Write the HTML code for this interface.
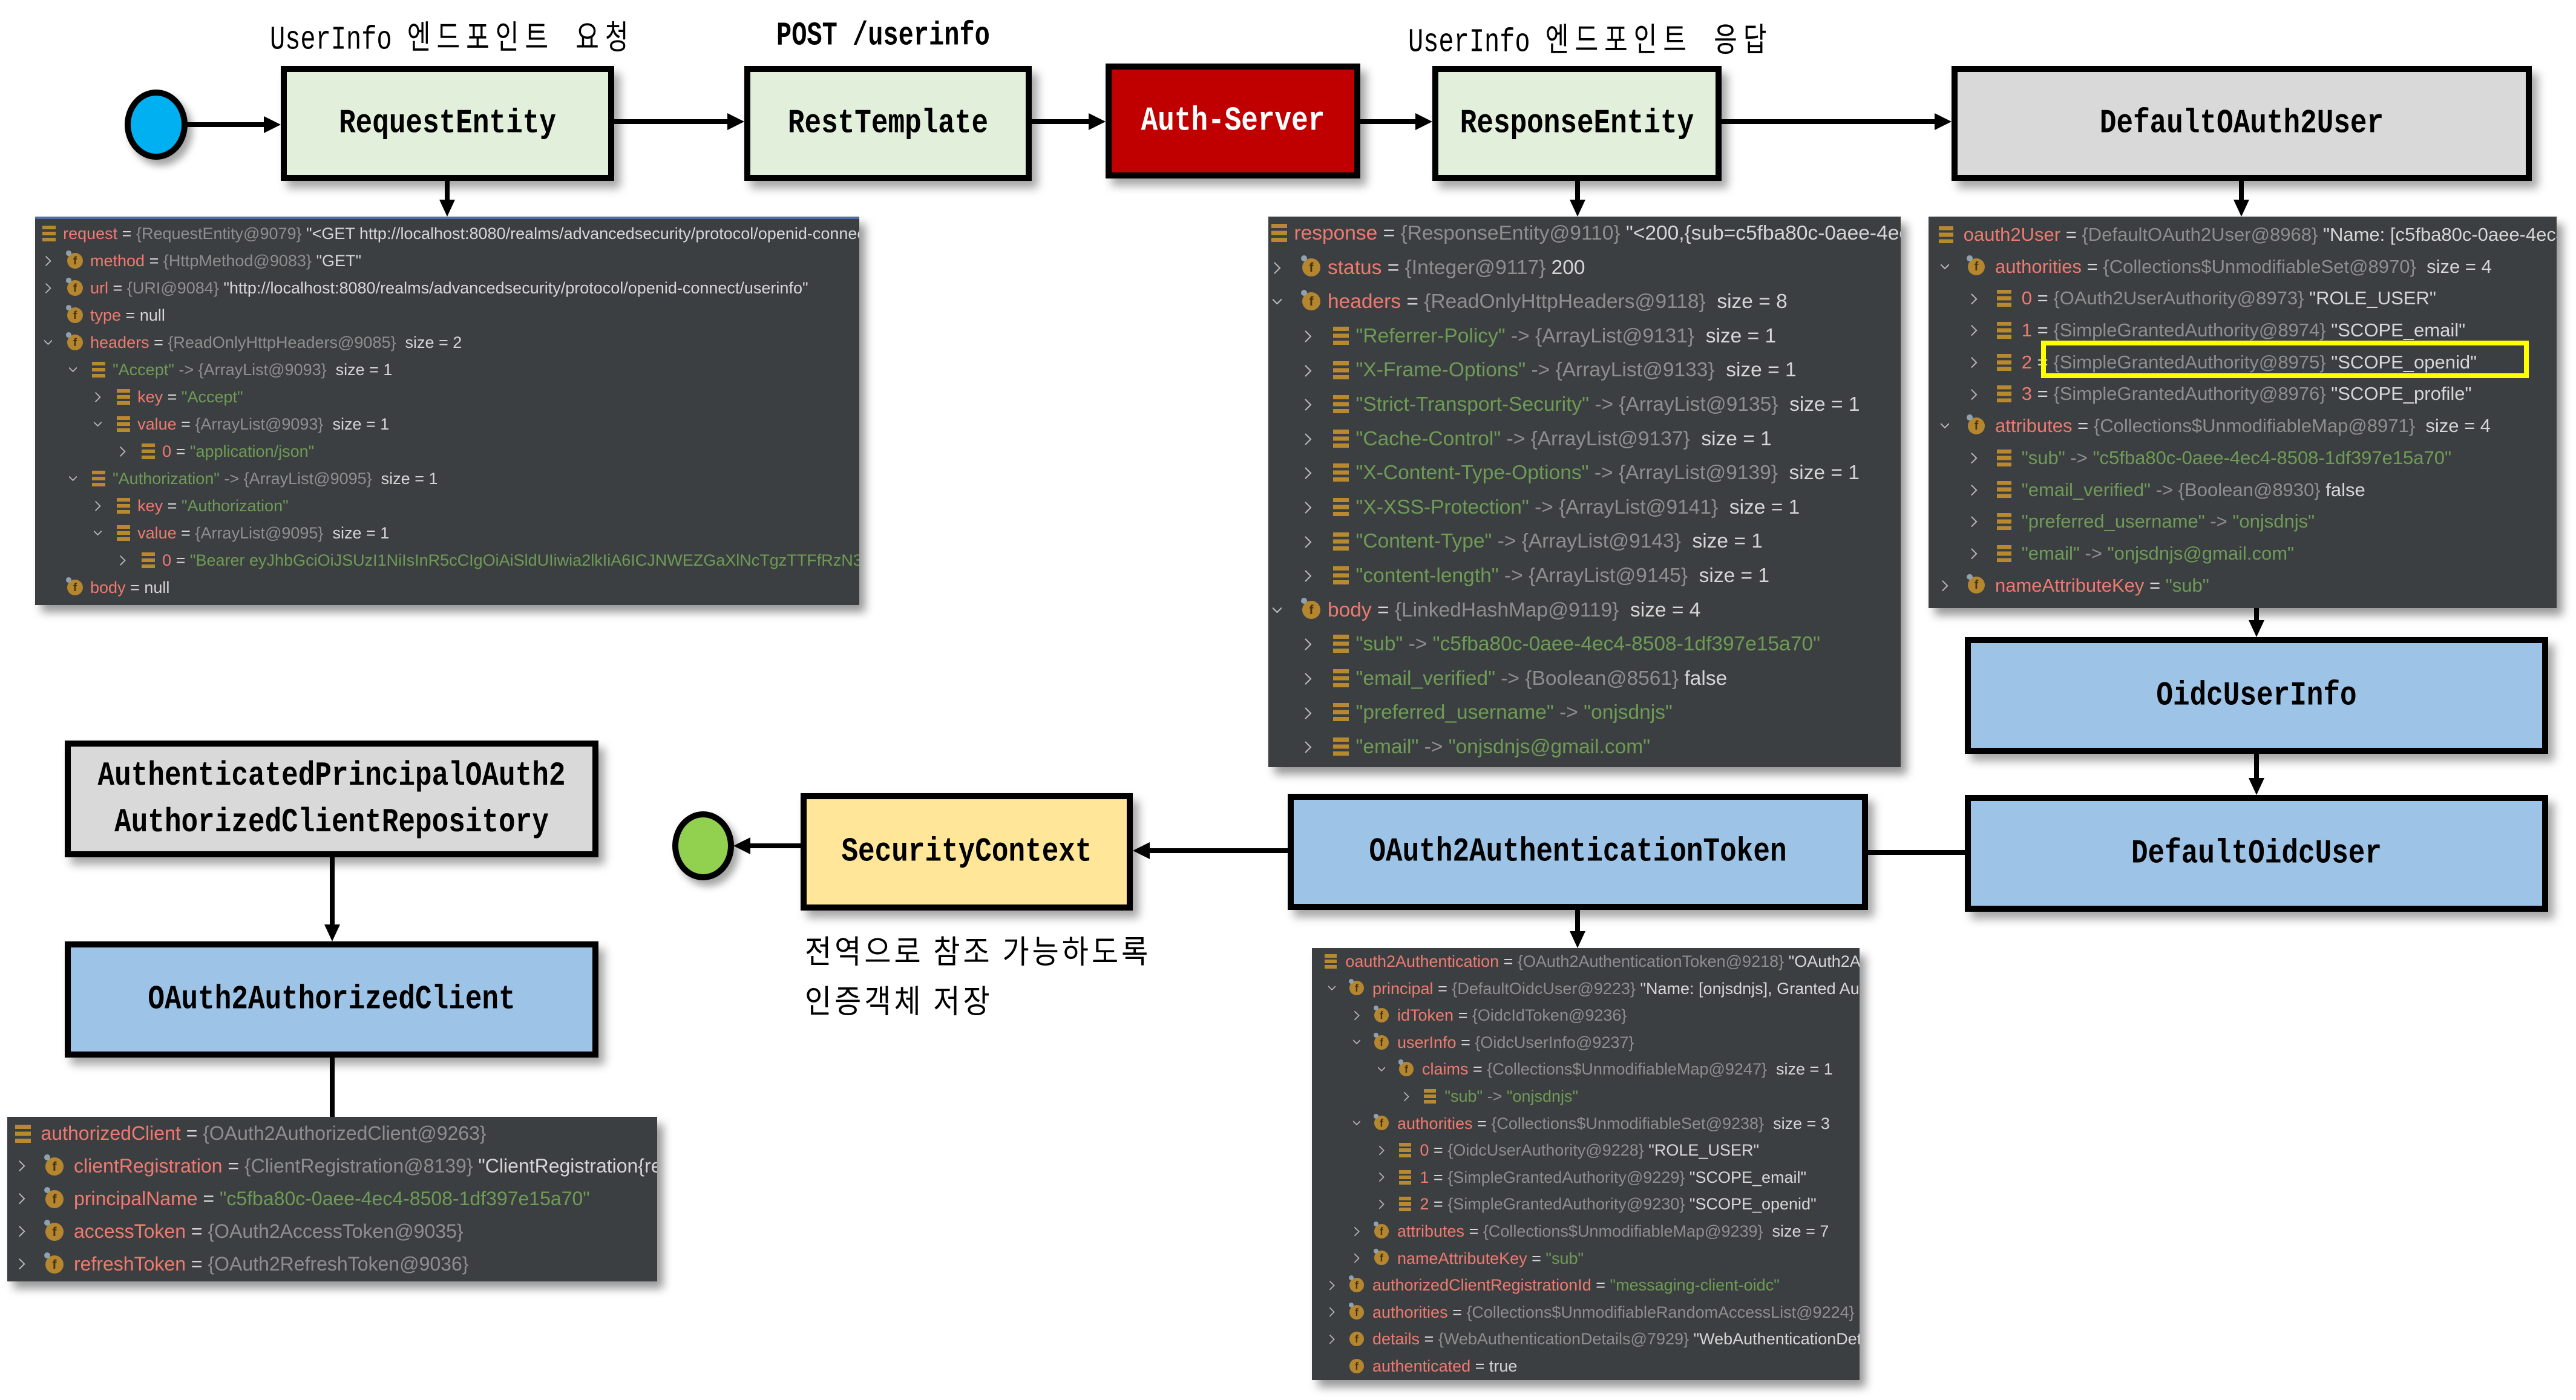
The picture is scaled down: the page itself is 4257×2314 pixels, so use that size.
<!DOCTYPE html>
<html><head><meta charset="utf-8">
<style>
*{margin:0;padding:0;box-sizing:border-box}
html,body{width:4257px;height:2314px;background:#fff;overflow:hidden;position:relative}
.t{position:absolute;font-family:"Liberation Mono","Noto Sans CJK KR",monospace;color:#000;white-space:nowrap;transform-origin:0 0}
.k{letter-spacing:10px}
.bx{position:absolute;border:10px solid #000;display:flex;align-items:center;justify-content:center;box-shadow:10px 12px 14px rgba(0,0,0,.35);font-family:"Liberation Mono",monospace;font-weight:bold;font-size:46px;color:#000;text-align:center;line-height:64px}
.bx span{display:inline-block;transform:scaleY(1.2)}
.g{background:#e2efda}.r{background:#c00000;color:#fff}.gr{background:#d9d9d9}.b{background:#9dc3e6}.y{background:#ffe699}
.p{position:absolute;background:#3c3f41;overflow:hidden;box-shadow:10px 12px 14px rgba(0,0,0,.4);font-family:"Liberation Sans",sans-serif;color:#d6d6d6}
.row{position:relative;height:var(--rh);line-height:var(--rh);white-space:nowrap;padding-left:calc(var(--b) + var(--l,0)*var(--in))}
.ic{display:inline-block;vertical-align:middle;width:var(--is);height:var(--is);margin-right:var(--gap);position:relative;margin-top:-4px}
.f{border-radius:50%;background:#b48630;color:#4a320a;font-size:calc(var(--is)*.72);line-height:var(--is);text-align:center;font-family:"Liberation Sans",sans-serif}
.f::before{content:"";position:absolute;left:-6%;top:-16%;width:34%;height:34%;background:#8fa0ae;border-radius:50%}
.f.nb::before{display:none}
.e{background:repeating-linear-gradient(#b8892e 0 24%,transparent 24% 38%);width:calc(var(--is)*.85)}
.c{position:absolute;top:0;height:100%;left:calc(var(--b) + var(--l,0)*var(--in) + var(--co));width:var(--cw);display:flex;align-items:center}
.c svg{width:100%;height:auto;fill:none;stroke:#b8b8b8;stroke-width:1.4}
.n{color:#ee7a70}.tp{color:#8e8e8e}.s{color:#6e9b55}.w{color:#dadada}
svg.ov{position:absolute;left:0;top:0}
</style></head><body>

<!-- titles -->
<div class="t" style="left:446px;top:18px;font-size:42px;transform:scaleY(1.3)">UserInfo <span class="k">엔드포인트 요청</span></div>
<div class="t" style="left:1283px;top:28px;font-size:42px;font-weight:bold;transform:scaleY(1.3)">POST /userinfo</div>
<div class="t" style="left:2327px;top:22px;font-size:42px;transform:scaleY(1.3)">UserInfo <span class="k">엔드포인트 응답</span></div>
<div class="t" style="left:1330px;top:1530px;font-size:48px;letter-spacing:5px;font-family:'Noto Sans CJK KR',sans-serif;transform:scaleY(1.1)">전역으로 참조 가능하도록</div>
<div class="t" style="left:1330px;top:1612px;font-size:48px;letter-spacing:5px;font-family:'Noto Sans CJK KR',sans-serif;transform:scaleY(1.1)">인증객체 저장</div>

<!-- boxes -->
<div class="bx g" style="left:464px;top:109px;width:551px;height:190px"><span>RequestEntity</span></div>
<div class="bx g" style="left:1230px;top:109px;width:475px;height:190px"><span>RestTemplate</span></div>
<div class="bx r" style="left:1827px;top:105px;width:421px;height:190px"><span>Auth-Server</span></div>
<div class="bx g" style="left:2367px;top:109px;width:478px;height:190px"><span>ResponseEntity</span></div>
<div class="bx gr" style="left:3225px;top:109px;width:959px;height:190px"><span>DefaultOAuth2User</span></div>
<div class="bx b" style="left:3247px;top:1053px;width:964px;height:193px"><span>OidcUserInfo</span></div>
<div class="bx b" style="left:3247px;top:1314px;width:964px;height:193px"><span>DefaultOidcUser</span></div>
<div class="bx b" style="left:2128px;top:1312px;width:959px;height:192px"><span>OAuth2AuthenticationToken</span></div>
<div class="bx y" style="left:1323px;top:1311px;width:549px;height:194px"><span>SecurityContext</span></div>
<div class="bx gr" style="left:107px;top:1224px;width:882px;height:193px"><span>AuthenticatedPrincipalOAuth2<br>AuthorizedClientRepository</span></div>
<div class="bx b" style="left:107px;top:1556px;width:882px;height:192px"><span>OAuth2AuthorizedClient</span></div>

<!-- connectors -->
<svg class="ov" width="4257" height="2314" viewBox="0 0 4257 2314">
<defs><filter id="sh" x="-50%" y="-50%" width="200%" height="200%"><feDropShadow dx="8" dy="10" stdDeviation="6" flood-opacity=".35"/></filter></defs>
<ellipse cx="258" cy="206" rx="47" ry="53" fill="#00b0f0" stroke="#000" stroke-width="10" filter="url(#sh)"/>
<ellipse cx="1162" cy="1398" rx="46" ry="52" fill="#92d050" stroke="#000" stroke-width="10" filter="url(#sh)"/>
<g stroke="#000" stroke-width="8" fill="none">
<path d="M305 206H440"/><path d="M1015 201H1206"/><path d="M1705 201H1803"/><path d="M2248 201H2343"/><path d="M2845 201H3201"/>
<path d="M739 299V336"/><path d="M2607 299V336"/><path d="M3704 299V336"/>
<path d="M3729 1005V1030"/><path d="M3729 1246V1290"/>
<path d="M3087 1409H3250"/>
<path d="M2128 1406H1898"/><path d="M1323 1398H1238"/>
<path d="M2607 1504V1545"/>
<path d="M549 1417V1533"/><path d="M549 1748V1846"/>
</g>
<g fill="#000">
<path d="M464 206l-28-14v28z"/><path d="M1230 201l-28-14v28z"/><path d="M1827 201l-28-14v28z"/><path d="M2367 201l-28-14v28z"/><path d="M3225 201l-28-14v28z"/>
<path d="M739 358l-13-28h26z"/><path d="M2607 358l-13-28h26z"/><path d="M3704 358l-13-28h26z"/>
<path d="M3729 1053l-13-28h26z"/><path d="M3729 1314l-13-28h26z"/>
<path d="M1872 1406l28-14v28z"/><path d="M1212 1398l28-14v28z"/>
<path d="M2607 1567l-13-28h26z"/><path d="M549 1556l-13-28h26z"/>
</g>
</svg>

<!-- Panel 1 -->
<div class="p" style="left:58px;top:358px;width:1362px;height:642px;border-top:4px solid #4d6ea8;padding-top:2px;font-size:27px;--rh:45px;--b:12px;--in:41px;--is:26px;--gap:12px;--co:-38px;--cw:13px">
<div class="row" style="--l:0"><b class="ic e"></b><span class="n">request</span> = <span class="tp">{RequestEntity@9079}</span> "&lt;GET http://localhost:8080/realms/advancedsecurity/protocol/openid-connect/userinfo,[Accept:&quot;application/json&quot;]&gt;"</div>
<div class="row" style="--l:1"><i class="c"><svg viewBox="0 0 10 16"><path d="M2 2l6 6-6 6"/></svg></i><b class="ic f">f</b><span class="n">method</span> = <span class="tp">{HttpMethod@9083}</span> "GET"</div>
<div class="row" style="--l:1"><i class="c"><svg viewBox="0 0 10 16"><path d="M2 2l6 6-6 6"/></svg></i><b class="ic f">f</b><span class="n">url</span> = <span class="tp">{URI@9084}</span> "http://localhost:8080/realms/advancedsecurity/protocol/openid-connect/userinfo"</div>
<div class="row" style="--l:1"><b class="ic f">f</b><span class="n">type</span> = null</div>
<div class="row" style="--l:1"><i class="c"><svg viewBox="0 0 10 16"><path d="M0 5l5 5 5-5"/></svg></i><b class="ic f">f</b><span class="n">headers</span> = <span class="tp">{ReadOnlyHttpHeaders@9085}</span>&nbsp; size = 2</div>
<div class="row" style="--l:2"><i class="c"><svg viewBox="0 0 10 16"><path d="M0 5l5 5 5-5"/></svg></i><b class="ic e"></b><span class="s">"Accept"</span> <span class="tp">-&gt; {ArrayList@9093}</span>&nbsp; size = 1</div>
<div class="row" style="--l:3"><i class="c"><svg viewBox="0 0 10 16"><path d="M2 2l6 6-6 6"/></svg></i><b class="ic e"></b><span class="n">key</span> = <span class="s">"Accept"</span></div>
<div class="row" style="--l:3"><i class="c"><svg viewBox="0 0 10 16"><path d="M0 5l5 5 5-5"/></svg></i><b class="ic e"></b><span class="n">value</span> = <span class="tp">{ArrayList@9093}</span>&nbsp; size = 1</div>
<div class="row" style="--l:4"><i class="c"><svg viewBox="0 0 10 16"><path d="M2 2l6 6-6 6"/></svg></i><b class="ic e"></b><span class="n">0</span> = <span class="s">"application/json"</span></div>
<div class="row" style="--l:2"><i class="c"><svg viewBox="0 0 10 16"><path d="M0 5l5 5 5-5"/></svg></i><b class="ic e"></b><span class="s">"Authorization"</span> <span class="tp">-&gt; {ArrayList@9095}</span>&nbsp; size = 1</div>
<div class="row" style="--l:3"><i class="c"><svg viewBox="0 0 10 16"><path d="M2 2l6 6-6 6"/></svg></i><b class="ic e"></b><span class="n">key</span> = <span class="s">"Authorization"</span></div>
<div class="row" style="--l:3"><i class="c"><svg viewBox="0 0 10 16"><path d="M0 5l5 5 5-5"/></svg></i><b class="ic e"></b><span class="n">value</span> = <span class="tp">{ArrayList@9095}</span>&nbsp; size = 1</div>
<div class="row" style="--l:4"><i class="c"><svg viewBox="0 0 10 16"><path d="M2 2l6 6-6 6"/></svg></i><b class="ic e"></b><span class="n">0</span> = <span class="s">"Bearer eyJhbGciOiJSUzI1NiIsInR5cCIgOiAiSldUIiwia2lkIiA6ICJNWEZGaXlNcTgzTTFfRzN3LVdZ"</span></div>
<div class="row" style="--l:1"><b class="ic f">f</b><span class="n">body</span> = null</div>
</div>

<!-- Panel 2 -->
<div class="p" style="left:2096px;top:358px;width:1045px;height:910px;font-size:33.5px;--rh:56.6px;--b:5px;--in:51px;--is:30px;--gap:12px;--co:-49px;--cw:15px">
<div class="row" style="--l:0"><b class="ic e"></b><span class="n">response</span> = <span class="tp">{ResponseEntity@9110}</span> "&lt;200,{sub=c5fba80c-0aee-4ec4-8508-1df397e15a70"</div>
<div class="row" style="--l:1"><i class="c"><svg viewBox="0 0 10 16"><path d="M2 2l6 6-6 6"/></svg></i><b class="ic f">f</b><span class="n">status</span> = <span class="tp">{Integer@9117}</span> 200</div>
<div class="row" style="--l:1"><i class="c"><svg viewBox="0 0 10 16"><path d="M0 5l5 5 5-5"/></svg></i><b class="ic f">f</b><span class="n">headers</span> = <span class="tp">{ReadOnlyHttpHeaders@9118}</span>&nbsp; size = 8</div>
<div class="row" style="--l:2"><i class="c"><svg viewBox="0 0 10 16"><path d="M2 2l6 6-6 6"/></svg></i><b class="ic e"></b><span class="s">"Referrer-Policy"</span> <span class="tp">-&gt; {ArrayList@9131}</span>&nbsp; size = 1</div>
<div class="row" style="--l:2"><i class="c"><svg viewBox="0 0 10 16"><path d="M2 2l6 6-6 6"/></svg></i><b class="ic e"></b><span class="s">"X-Frame-Options"</span> <span class="tp">-&gt; {ArrayList@9133}</span>&nbsp; size = 1</div>
<div class="row" style="--l:2"><i class="c"><svg viewBox="0 0 10 16"><path d="M2 2l6 6-6 6"/></svg></i><b class="ic e"></b><span class="s">"Strict-Transport-Security"</span> <span class="tp">-&gt; {ArrayList@9135}</span>&nbsp; size = 1</div>
<div class="row" style="--l:2"><i class="c"><svg viewBox="0 0 10 16"><path d="M2 2l6 6-6 6"/></svg></i><b class="ic e"></b><span class="s">"Cache-Control"</span> <span class="tp">-&gt; {ArrayList@9137}</span>&nbsp; size = 1</div>
<div class="row" style="--l:2"><i class="c"><svg viewBox="0 0 10 16"><path d="M2 2l6 6-6 6"/></svg></i><b class="ic e"></b><span class="s">"X-Content-Type-Options"</span> <span class="tp">-&gt; {ArrayList@9139}</span>&nbsp; size = 1</div>
<div class="row" style="--l:2"><i class="c"><svg viewBox="0 0 10 16"><path d="M2 2l6 6-6 6"/></svg></i><b class="ic e"></b><span class="s">"X-XSS-Protection"</span> <span class="tp">-&gt; {ArrayList@9141}</span>&nbsp; size = 1</div>
<div class="row" style="--l:2"><i class="c"><svg viewBox="0 0 10 16"><path d="M2 2l6 6-6 6"/></svg></i><b class="ic e"></b><span class="s">"Content-Type"</span> <span class="tp">-&gt; {ArrayList@9143}</span>&nbsp; size = 1</div>
<div class="row" style="--l:2"><i class="c"><svg viewBox="0 0 10 16"><path d="M2 2l6 6-6 6"/></svg></i><b class="ic e"></b><span class="s">"content-length"</span> <span class="tp">-&gt; {ArrayList@9145}</span>&nbsp; size = 1</div>
<div class="row" style="--l:1"><i class="c"><svg viewBox="0 0 10 16"><path d="M0 5l5 5 5-5"/></svg></i><b class="ic f">f</b><span class="n">body</span> = <span class="tp">{LinkedHashMap@9119}</span>&nbsp; size = 4</div>
<div class="row" style="--l:2"><i class="c"><svg viewBox="0 0 10 16"><path d="M2 2l6 6-6 6"/></svg></i><b class="ic e"></b><span class="s">"sub"</span> <span class="tp">-&gt;</span> <span class="s">"c5fba80c-0aee-4ec4-8508-1df397e15a70"</span></div>
<div class="row" style="--l:2"><i class="c"><svg viewBox="0 0 10 16"><path d="M2 2l6 6-6 6"/></svg></i><b class="ic e"></b><span class="s">"email_verified"</span> <span class="tp">-&gt; {Boolean@8561}</span> false</div>
<div class="row" style="--l:2"><i class="c"><svg viewBox="0 0 10 16"><path d="M2 2l6 6-6 6"/></svg></i><b class="ic e"></b><span class="s">"preferred_username"</span> <span class="tp">-&gt;</span> <span class="s">"onjsdnjs"</span></div>
<div class="row" style="--l:2"><i class="c"><svg viewBox="0 0 10 16"><path d="M2 2l6 6-6 6"/></svg></i><b class="ic e"></b><span class="s">"email"</span> <span class="tp">-&gt;</span> <span class="s">"onjsdnjs@gmail.com"</span></div>
</div>

<!-- Panel 3 -->
<div class="p" style="left:3187px;top:358px;width:1038px;height:647px;padding-top:4px;font-size:31px;--rh:52.7px;--b:17px;--in:48px;--is:28px;--gap:17px;--co:-45px;--cw:14px">
<div class="row" style="--l:0"><b class="ic e"></b><span class="n">oauth2User</span> = <span class="tp">{DefaultOAuth2User@8968}</span> "Name: [c5fba80c-0aee-4ec4-8508"</div>
<div class="row" style="--l:1"><i class="c"><svg viewBox="0 0 10 16"><path d="M0 5l5 5 5-5"/></svg></i><b class="ic f">f</b><span class="n">authorities</span> = <span class="tp">{Collections$UnmodifiableSet@8970}</span>&nbsp; size = 4</div>
<div class="row" style="--l:2"><i class="c"><svg viewBox="0 0 10 16"><path d="M2 2l6 6-6 6"/></svg></i><b class="ic e"></b><span class="n">0</span> = <span class="tp">{OAuth2UserAuthority@8973}</span> "ROLE_USER"</div>
<div class="row" style="--l:2"><i class="c"><svg viewBox="0 0 10 16"><path d="M2 2l6 6-6 6"/></svg></i><b class="ic e"></b><span class="n">1</span> = <span class="tp">{SimpleGrantedAuthority@8974}</span> "SCOPE_email"</div>
<div class="row" style="--l:2"><i class="c"><svg viewBox="0 0 10 16"><path d="M2 2l6 6-6 6"/></svg></i><b class="ic e"></b><span class="n">2</span> = <span class="tp">{SimpleGrantedAuthority@8975}</span> "SCOPE_openid"</div>
<div class="row" style="--l:2"><i class="c"><svg viewBox="0 0 10 16"><path d="M2 2l6 6-6 6"/></svg></i><b class="ic e"></b><span class="n">3</span> = <span class="tp">{SimpleGrantedAuthority@8976}</span> "SCOPE_profile"</div>
<div class="row" style="--l:1"><i class="c"><svg viewBox="0 0 10 16"><path d="M0 5l5 5 5-5"/></svg></i><b class="ic f">f</b><span class="n">attributes</span> = <span class="tp">{Collections$UnmodifiableMap@8971}</span>&nbsp; size = 4</div>
<div class="row" style="--l:2"><i class="c"><svg viewBox="0 0 10 16"><path d="M2 2l6 6-6 6"/></svg></i><b class="ic e"></b><span class="s">"sub"</span> <span class="tp">-&gt;</span> <span class="s">"c5fba80c-0aee-4ec4-8508-1df397e15a70"</span></div>
<div class="row" style="--l:2"><i class="c"><svg viewBox="0 0 10 16"><path d="M2 2l6 6-6 6"/></svg></i><b class="ic e"></b><span class="s">"email_verified"</span> <span class="tp">-&gt; {Boolean@8930}</span> false</div>
<div class="row" style="--l:2"><i class="c"><svg viewBox="0 0 10 16"><path d="M2 2l6 6-6 6"/></svg></i><b class="ic e"></b><span class="s">"preferred_username"</span> <span class="tp">-&gt;</span> <span class="s">"onjsdnjs"</span></div>
<div class="row" style="--l:2"><i class="c"><svg viewBox="0 0 10 16"><path d="M2 2l6 6-6 6"/></svg></i><b class="ic e"></b><span class="s">"email"</span> <span class="tp">-&gt;</span> <span class="s">"onjsdnjs@gmail.com"</span></div>
<div class="row" style="--l:1"><i class="c"><svg viewBox="0 0 10 16"><path d="M2 2l6 6-6 6"/></svg></i><b class="ic f">f</b><span class="n">nameAttributeKey</span> = <span class="s">"sub"</span></div>
</div>
<div style="position:absolute;left:3373px;top:563px;width:806px;height:62px;border:8px solid #ffff00"></div>

<!-- Panel 4 -->
<div class="p" style="left:2168px;top:1567px;width:905px;height:714px;font-size:27px;--rh:44.6px;--b:21px;--in:41px;--is:24px;--gap:14px;--co:-35px;--cw:12px">
<div class="row" style="--l:0"><b class="ic e"></b><span class="n">oauth2Authentication</span> = <span class="tp">{OAuth2AuthenticationToken@9218}</span> "OAuth2AuthenticationToken [Principal"</div>
<div class="row" style="--l:1"><i class="c"><svg viewBox="0 0 10 16"><path d="M0 5l5 5 5-5"/></svg></i><b class="ic f">f</b><span class="n">principal</span> = <span class="tp">{DefaultOidcUser@9223}</span> "Name: [onjsdnjs], Granted Authorities"</div>
<div class="row" style="--l:2"><i class="c"><svg viewBox="0 0 10 16"><path d="M2 2l6 6-6 6"/></svg></i><b class="ic f">f</b><span class="n">idToken</span> = <span class="tp">{OidcIdToken@9236}</span></div>
<div class="row" style="--l:2"><i class="c"><svg viewBox="0 0 10 16"><path d="M0 5l5 5 5-5"/></svg></i><b class="ic f">f</b><span class="n">userInfo</span> = <span class="tp">{OidcUserInfo@9237}</span></div>
<div class="row" style="--l:3"><i class="c"><svg viewBox="0 0 10 16"><path d="M0 5l5 5 5-5"/></svg></i><b class="ic f">f</b><span class="n">claims</span> = <span class="tp">{Collections$UnmodifiableMap@9247}</span>&nbsp; size = 1</div>
<div class="row" style="--l:4"><i class="c"><svg viewBox="0 0 10 16"><path d="M2 2l6 6-6 6"/></svg></i><b class="ic e"></b><span class="s">"sub"</span> <span class="tp">-&gt;</span> <span class="s">"onjsdnjs"</span></div>
<div class="row" style="--l:2"><i class="c"><svg viewBox="0 0 10 16"><path d="M0 5l5 5 5-5"/></svg></i><b class="ic f">f</b><span class="n">authorities</span> = <span class="tp">{Collections$UnmodifiableSet@9238}</span>&nbsp; size = 3</div>
<div class="row" style="--l:3"><i class="c"><svg viewBox="0 0 10 16"><path d="M2 2l6 6-6 6"/></svg></i><b class="ic e"></b><span class="n">0</span> = <span class="tp">{OidcUserAuthority@9228}</span> "ROLE_USER"</div>
<div class="row" style="--l:3"><i class="c"><svg viewBox="0 0 10 16"><path d="M2 2l6 6-6 6"/></svg></i><b class="ic e"></b><span class="n">1</span> = <span class="tp">{SimpleGrantedAuthority@9229}</span> "SCOPE_email"</div>
<div class="row" style="--l:3"><i class="c"><svg viewBox="0 0 10 16"><path d="M2 2l6 6-6 6"/></svg></i><b class="ic e"></b><span class="n">2</span> = <span class="tp">{SimpleGrantedAuthority@9230}</span> "SCOPE_openid"</div>
<div class="row" style="--l:2"><i class="c"><svg viewBox="0 0 10 16"><path d="M2 2l6 6-6 6"/></svg></i><b class="ic f">f</b><span class="n">attributes</span> = <span class="tp">{Collections$UnmodifiableMap@9239}</span>&nbsp; size = 7</div>
<div class="row" style="--l:2"><i class="c"><svg viewBox="0 0 10 16"><path d="M2 2l6 6-6 6"/></svg></i><b class="ic f">f</b><span class="n">nameAttributeKey</span> = <span class="s">"sub"</span></div>
<div class="row" style="--l:1"><i class="c"><svg viewBox="0 0 10 16"><path d="M2 2l6 6-6 6"/></svg></i><b class="ic f">f</b><span class="n">authorizedClientRegistrationId</span> = <span class="s">"messaging-client-oidc"</span></div>
<div class="row" style="--l:1"><i class="c"><svg viewBox="0 0 10 16"><path d="M2 2l6 6-6 6"/></svg></i><b class="ic f">f</b><span class="n">authorities</span> = <span class="tp">{Collections$UnmodifiableRandomAccessList@9224}</span>&nbsp; size = 3</div>
<div class="row" style="--l:1"><i class="c"><svg viewBox="0 0 10 16"><path d="M2 2l6 6-6 6"/></svg></i><b class="ic f nb">f</b><span class="n">details</span> = <span class="tp">{WebAuthenticationDetails@7929}</span> "WebAuthenticationDetails [RemoteIp"</div>
<div class="row" style="--l:1"><b class="ic f nb">f</b><span class="n">authenticated</span> = true</div>
</div>

<!-- Panel 5 -->
<div class="p" style="left:12px;top:1846px;width:1074px;height:272px;font-size:32px;--rh:54px;--b:13px;--in:50px;--is:30px;--gap:17px;--co:-46px;--cw:14px">
<div class="row" style="--l:0"><b class="ic e"></b><span class="n">authorizedClient</span> = <span class="tp">{OAuth2AuthorizedClient@9263}</span></div>
<div class="row" style="--l:1"><i class="c"><svg viewBox="0 0 10 16"><path d="M2 2l6 6-6 6"/></svg></i><b class="ic f">f</b><span class="n">clientRegistration</span> = <span class="tp">{ClientRegistration@8139}</span> "ClientRegistration{registrationId"</div>
<div class="row" style="--l:1"><i class="c"><svg viewBox="0 0 10 16"><path d="M2 2l6 6-6 6"/></svg></i><b class="ic f">f</b><span class="n">principalName</span> = <span class="s">"c5fba80c-0aee-4ec4-8508-1df397e15a70"</span></div>
<div class="row" style="--l:1"><i class="c"><svg viewBox="0 0 10 16"><path d="M2 2l6 6-6 6"/></svg></i><b class="ic f">f</b><span class="n">accessToken</span> = <span class="tp">{OAuth2AccessToken@9035}</span></div>
<div class="row" style="--l:1"><i class="c"><svg viewBox="0 0 10 16"><path d="M2 2l6 6-6 6"/></svg></i><b class="ic f">f</b><span class="n">refreshToken</span> = <span class="tp">{OAuth2RefreshToken@9036}</span></div>
</div>

</body></html>
